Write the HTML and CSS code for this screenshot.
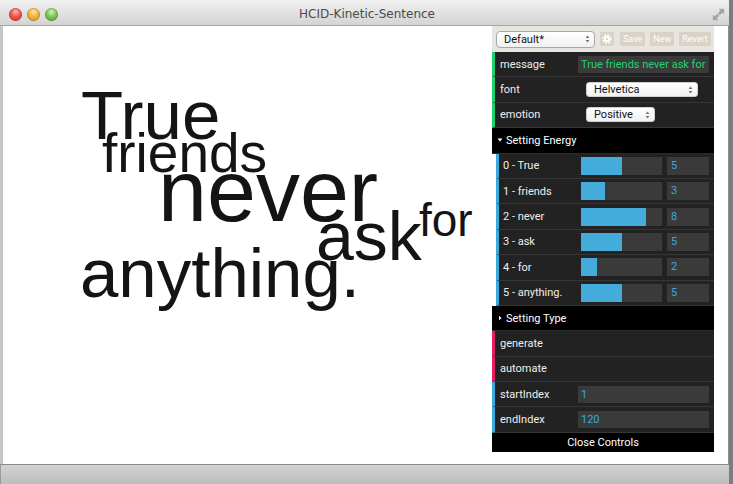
FILE: index.html
```html
<!DOCTYPE html>
<html>
<head>
<meta charset="utf-8">
<link rel="stylesheet" href="styles.css">
</head>
<body>
<div class="window">
  <div class="titlebar">
    <div class="lights">
      <span class="light red"></span>
      <span class="light yellow"></span>
      <span class="light green"></span>
    </div>
    <div class="title">HCID-Kinetic-Sentence</div>
    <div class="tb-right">
      <svg class="fullscreen" width="13" height="13" viewBox="0 0 13 13"><path d="M7.2 1.2h4.6v4.6l-1.5-1.5-2.5 2.5-1.6-1.6 2.5-2.5z M5.8 11.8H1.2V7.2l1.5 1.5 2.5-2.5 1.6 1.6-2.5 2.5z" fill="#a3a3a3" stroke="#8a8a8a" stroke-width="0.4"/></svg>
    </div>
  </div>
  <div class="content">
    <div class="canvas">
      <span class="word w-true">True</span>
      <span class="word w-friends">friends</span>
      <span class="word w-never">never</span>
      <span class="word w-ask">ask</span>
      <span class="word w-for">for</span>
      <span class="word w-anything">anything.</span>
    </div>
    <div class="gui">
      <div class="save-row">
        <div class="select preset"><span>Default*</span><svg class="updown" width="5" height="8" viewBox="0 0 5 8"><path d="M0.5 3L2.5 0.5 4.5 3z M0.5 5L2.5 7.5 4.5 5z" fill="#777"/></svg></div>
        <div class="btn gear"><svg width="10" height="10" viewBox="0 0 10 10"><circle cx="5" cy="5" r="3.6" fill="none" stroke="#fff" stroke-width="2.4" stroke-dasharray="1.6 1.2"/><circle cx="5" cy="5" r="3" fill="#fff"/><circle cx="5" cy="5" r="1.1" fill="#d7d1c6"/></svg></div>
        <div class="btn">Save</div>
        <div class="btn">New</div>
        <div class="btn">Revert</div>
      </div>

      <div class="row str"><span class="name">message</span><div class="field text-green">True friends never ask for</div></div>
      <div class="row str"><span class="name">font</span><div class="select opt wide"><span>Helvetica</span><svg class="updown" width="5" height="8" viewBox="0 0 5 8"><path d="M0.5 3L2.5 0.5 4.5 3z M0.5 5L2.5 7.5 4.5 5z" fill="#777"/></svg></div></div>
      <div class="row str"><span class="name">emotion</span><div class="select opt narrow"><span>Positive</span><svg class="updown" width="5" height="8" viewBox="0 0 5 8"><path d="M0.5 3L2.5 0.5 4.5 3z M0.5 5L2.5 7.5 4.5 5z" fill="#777"/></svg></div></div>

      <div class="folder-title"><svg class="tri" width="6" height="6" viewBox="0 0 6 6"><path d="M0.5 1.5h5L3 4.5z" fill="#fff"/></svg><span>Setting Energy</span></div>
      <div class="folder">
        <div class="row num"><span class="name">0 - True</span><div class="slider"><div class="fill" style="width:50%"></div></div><div class="field numbox">5</div></div>
        <div class="row num"><span class="name">1 - friends</span><div class="slider"><div class="fill" style="width:30%"></div></div><div class="field numbox">3</div></div>
        <div class="row num"><span class="name">2 - never</span><div class="slider"><div class="fill" style="width:80%"></div></div><div class="field numbox">8</div></div>
        <div class="row num"><span class="name">3 - ask</span><div class="slider"><div class="fill" style="width:50%"></div></div><div class="field numbox">5</div></div>
        <div class="row num"><span class="name">4 - for</span><div class="slider"><div class="fill" style="width:20%"></div></div><div class="field numbox">2</div></div>
        <div class="row num"><span class="name">5 - anything.</span><div class="slider"><div class="fill" style="width:50%"></div></div><div class="field numbox">5</div></div>
      </div>

      <div class="folder-title"><svg class="tri" width="6" height="6" viewBox="0 0 6 6"><path d="M2 0.8v4.4L4.6 3z" fill="#fff"/></svg><span>Setting Type</span></div>

      <div class="row fn"><span class="name">generate</span></div>
      <div class="row fn"><span class="name">automate</span></div>
      <div class="row num"><span class="name">startIndex</span><div class="field text-blue">1</div></div>
      <div class="row num"><span class="name">endIndex</span><div class="field text-blue">120</div></div>

      <div class="close">Close Controls</div>
    </div>
  </div>
  <div class="bottombar"></div>
</div>
</body>
</html>
```

FILE: styles.css
```css
* {
  box-sizing: border-box;
  margin: 0;
  padding: 0;
}

html, body {
  width: 733px;
  height: 484px;
  overflow: hidden;
}

body {
  background: #7c7c7c;
  font-family: Roboto, "DejaVu Sans", sans-serif;
}

.window {
  width: 729px;
  height: 484px;
  display: flex;
  flex-direction: column;
  background: #fff;
}

/* ---------- title bar ---------- */
.titlebar {
  flex: none;
  height: 26px;
  padding-top: 3px;
  display: grid;
  grid-template-columns: 1fr auto 1fr;
  align-items: center;
  background: linear-gradient(#f0f0f0, #d4d4d4);
  border-bottom: 1px solid #a4a4a4;
}

.lights {
  display: flex;
  gap: 5px;
  padding-left: 9px;
}

.light {
  width: 13px;
  height: 13px;
  border-radius: 50%;
  box-shadow: inset 0 0 0 1px rgba(0, 0, 0, 0.18);
}

.red {
  background: radial-gradient(circle at 50% 30%, #ffb3ad 0, #f0524a 45%, #c92f2a 100%);
}

.yellow {
  background: radial-gradient(circle at 50% 30%, #ffe3a8 0, #f2b43a 45%, #c9881d 100%);
}

.green {
  background: radial-gradient(circle at 50% 30%, #d3f2b9 0, #7ec456 45%, #4f9a2f 100%);
}

.title {
  font-family: "DejaVu Sans", sans-serif;
  font-size: 12px;
  color: #4a4a4a;
  padding-left: 5px;
}

.tb-right {
  display: flex;
  justify-content: flex-end;
  padding-right: 4px;
}

.fullscreen {
  display: block;
}

/* ---------- content ---------- */
.content {
  flex: 1;
  display: flex;
  align-items: flex-start;
  border-left: 3px solid #c6c6c6;
  border-right: 1px solid #8e8e8e;
  background: #fff;
}

.canvas {
  position: relative;
  flex: none;
  width: 489px;
  height: 100%;
}

.word {
  position: absolute;
  font-family: "Liberation Sans", Arial, Helvetica, sans-serif;
  line-height: 1;
  color: #141414;
  white-space: nowrap;
}

.w-true { left: 78px; top: 55px; font-size: 69px; }
.w-friends { left: 99px; top: 100px; font-size: 55px; }
.w-never { left: 155px; top: 121px; font-size: 88px; }
.w-ask { left: 313px; top: 176px; font-size: 68px; }
.w-for { left: 416px; top: 171px; font-size: 46px; }
.w-anything { left: 77px; top: 213px; font-size: 69px; }

/* ---------- control panel ---------- */
.gui {
  flex: none;
  width: 222px;
  font-size: 11px;
  color: #eee;
}

.save-row {
  height: 26px;
  display: flex;
  align-items: center;
  gap: 5px;
  padding-left: 4px;
  background: #e8e5e0;
}

.select {
  display: flex;
  align-items: center;
  justify-content: space-between;
  background: linear-gradient(#ffffff, #f1f1f1);
  border: 1px solid #a8a8a8;
  border-radius: 4px;
  color: #111;
  font-size: 11px;
  padding: 0 4px 0 7px;
}

.preset {
  width: 99px;
  height: 17px;
}

.updown {
  display: block;
  flex: none;
}

.btn {
  height: 14px;
  padding: 0 3px;
  display: flex;
  align-items: center;
  justify-content: center;
  background: #d8d2c7;
  color: #fff;
  font-size: 9px;
  border-radius: 1px;
}

.gear {
  width: 14px;
  padding: 0;
  margin-right: 1px;
}

.row {
  height: 25.4px;
  display: flex;
  align-items: center;
  background: #222;
  border-left: 3px solid #2fa1d6;
  border-bottom: 1px solid #363636;
  padding: 0 5px 0 5px;
  white-space: nowrap;
}

.row.str { border-left-color: #1ed36f; }
.row.num { border-left-color: #3aa9dd; }
.row.fn { border-left-color: #e61d5f; }

.name {
  flex: none;
  width: 78px;
  color: #eee;
}

.folder {
  padding-left: 4px;
}

.folder .row {
  padding-left: 4px;
}

.field {
  flex: 1;
  height: 17px;
  background: #3a3a3a;
  padding-left: 3px;
  line-height: 17px;
  overflow: hidden;
  white-space: nowrap;
}

.text-green { color: #1ed36f; }
.text-blue { color: #3aa9dd; }

.opt {
  height: 15px;
  border-radius: 3px;
  border-color: #cfcfcf;
  margin-left: 8px;
}

.wide { width: 112px; }
.narrow { width: 69px; }

.slider {
  flex: none;
  width: 81px;
  height: 18px;
  background: #3a3a3a;
  margin-right: 5px;
}

.fill {
  height: 100%;
  background: #43acdb;
}

.numbox {
  flex: none;
  width: 42px;
  height: 18px;
  line-height: 18px;
  color: #3aa9dd;
  padding-left: 4px;
}

.folder-title {
  height: 25.4px;
  display: flex;
  align-items: center;
  gap: 3px;
  background: #000;
  color: #fff;
  padding-left: 5px;
  border-bottom: 1px solid #2a2a2a;
}

.tri {
  display: block;
  flex: none;
}

.close {
  height: 19px;
  line-height: 19px;
  background: #000;
  color: #fff;
  text-align: center;
}

/* ---------- bottom bar ---------- */
.bottombar {
  flex: none;
  height: 20px;
  background: linear-gradient(#d2d2d2, #bdbdbd);
  border-top: 1px solid #8a8a8a;
  border-left: 1px solid #9a9a9a;
}
```
